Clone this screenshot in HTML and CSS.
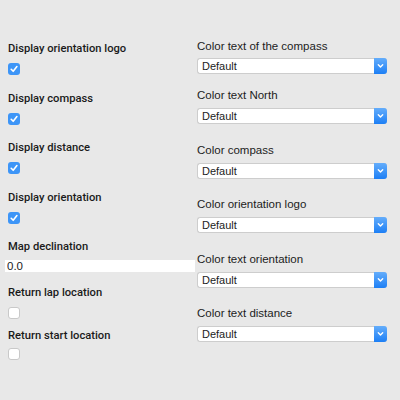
FILE: index.html
```html
<!DOCTYPE html>
<html>
<head>
<meta charset="utf-8">
<link rel="stylesheet" href="styles.css">
</head>
<body>
<div class="form">
  <div class="col col-left">
    <div class="group">
      <div class="label strong">Display orientation logo</div>
      <span class="cb on"><svg viewBox="0 0 12 12" width="12" height="12"><path d="M3.2 6.3 L5.2 8.3 L8.9 3.6" fill="none" stroke="#fff" stroke-width="1.6" stroke-linecap="round" stroke-linejoin="round"/></svg></span>
    </div>
    <div class="group">
      <div class="label strong">Display compass</div>
      <span class="cb on"><svg viewBox="0 0 12 12" width="12" height="12"><path d="M3.2 6.3 L5.2 8.3 L8.9 3.6" fill="none" stroke="#fff" stroke-width="1.6" stroke-linecap="round" stroke-linejoin="round"/></svg></span>
    </div>
    <div class="group">
      <div class="label strong">Display distance</div>
      <span class="cb on"><svg viewBox="0 0 12 12" width="12" height="12"><path d="M3.2 6.3 L5.2 8.3 L8.9 3.6" fill="none" stroke="#fff" stroke-width="1.6" stroke-linecap="round" stroke-linejoin="round"/></svg></span>
    </div>
    <div class="group">
      <div class="label strong">Display orientation</div>
      <span class="cb on"><svg viewBox="0 0 12 12" width="12" height="12"><path d="M3.2 6.3 L5.2 8.3 L8.9 3.6" fill="none" stroke="#fff" stroke-width="1.6" stroke-linecap="round" stroke-linejoin="round"/></svg></span>
    </div>
    <div class="group group-input">
      <div class="label strong">Map declination</div>
      <input class="text-input" type="text" value="0.0">
    </div>
    <div class="group group-tight">
      <div class="label strong">Return lap location</div>
      <span class="cb"></span>
    </div>
    <div class="group group-last">
      <div class="label strong">Return start location</div>
      <span class="cb"></span>
    </div>
  </div>
  <div class="col col-right">
    <div class="rgroup rgroup-first">
      <div class="label">Color text of the compass</div>
      <div class="select"><span class="sel-text">Default</span><span class="sel-btn"><svg viewBox="0 0 13 16" width="13" height="16"><path d="M4.3 6.8 L6.5 9 L8.7 6.8" fill="none" stroke="#fff" stroke-width="1.4" stroke-linecap="round" stroke-linejoin="round"/></svg></span></div>
    </div>
    <div class="rgroup">
      <div class="label">Color text North</div>
      <div class="select"><span class="sel-text">Default</span><span class="sel-btn"><svg viewBox="0 0 13 16" width="13" height="16"><path d="M4.3 6.8 L6.5 9 L8.7 6.8" fill="none" stroke="#fff" stroke-width="1.4" stroke-linecap="round" stroke-linejoin="round"/></svg></span></div>
    </div>
    <div class="rgroup">
      <div class="label">Color compass</div>
      <div class="select"><span class="sel-text">Default</span><span class="sel-btn"><svg viewBox="0 0 13 16" width="13" height="16"><path d="M4.3 6.8 L6.5 9 L8.7 6.8" fill="none" stroke="#fff" stroke-width="1.4" stroke-linecap="round" stroke-linejoin="round"/></svg></span></div>
    </div>
    <div class="rgroup">
      <div class="label">Color orientation logo</div>
      <div class="select"><span class="sel-text">Default</span><span class="sel-btn"><svg viewBox="0 0 13 16" width="13" height="16"><path d="M4.3 6.8 L6.5 9 L8.7 6.8" fill="none" stroke="#fff" stroke-width="1.4" stroke-linecap="round" stroke-linejoin="round"/></svg></span></div>
    </div>
    <div class="rgroup">
      <div class="label">Color text orientation</div>
      <div class="select"><span class="sel-text">Default</span><span class="sel-btn"><svg viewBox="0 0 13 16" width="13" height="16"><path d="M4.3 6.8 L6.5 9 L8.7 6.8" fill="none" stroke="#fff" stroke-width="1.4" stroke-linecap="round" stroke-linejoin="round"/></svg></span></div>
    </div>
    <div class="rgroup">
      <div class="label">Color text distance</div>
      <div class="select"><span class="sel-text">Default</span><span class="sel-btn"><svg viewBox="0 0 13 16" width="13" height="16"><path d="M4.3 6.8 L6.5 9 L8.7 6.8" fill="none" stroke="#fff" stroke-width="1.4" stroke-linecap="round" stroke-linejoin="round"/></svg></span></div>
    </div>
  </div>
</div>
</body>
</html>
```
FILE: styles.css
```css
html, body {
  margin: 0;
  padding: 0;
  background: #e8e8e8;
}
body {
  width: 400px;
  height: 400px;
  overflow: hidden;
  font-family: "Liberation Sans", Arial, sans-serif;
  font-size: 11px;
  color: #1c1c1c;
}
.form {
  display: flex;
  align-items: flex-start;
}
.col {
  display: flex;
  flex-direction: column;
  align-items: flex-start;
}
.col-left {
  width: 189px;
  padding: 42px 0 0 8px;
}
.col-right {
  width: 192px;
  padding: 39px 0 0 0;
}
.label {
  line-height: 14px;
  height: 14px;
  font-size: 11.5px;
  white-space: nowrap;
}
.strong {
  font-family: Roboto, "Liberation Sans", Arial, sans-serif;
  font-weight: 500;
  font-size: 11.2px;
  color: #1a1a1a;
}
.group {
  display: flex;
  flex-direction: column;
  align-items: flex-start;
  gap: 7px;
  margin-bottom: 16.5px;
}
.group-input {
  gap: 6px;
  margin-bottom: 14px;
}
.group-tight {
  margin-bottom: 10px;
}
.group-last {
  gap: 5px;
}
.cb {
  display: block;
  width: 12px;
  height: 12px;
  box-sizing: border-box;
  border-radius: 3px;
  background: #fff;
  border: 1px solid #c9c9c9;
}
.cb.on {
  background: #3d95f7;
  border: none;
}
.cb svg {
  display: block;
}
.text-input {
  display: block;
  margin: 0 0 0 -3px;
  width: 190px;
  height: 12px;
  box-sizing: border-box;
  border: none;
  padding: 0 2px;
  background: #fff;
  font-family: "Liberation Sans", Arial, sans-serif;
  font-size: 11.5px;
  line-height: 12px;
  color: #1c1c1c;
  outline: none;
}
.rgroup {
  display: flex;
  flex-direction: column;
  align-items: flex-start;
  gap: 6px;
  margin-bottom: 18.5px;
}
.rgroup-first {
  gap: 5px;
  margin-bottom: 14px;
}
.select {
  display: flex;
  align-items: stretch;
  width: 190px;
  height: 16px;
  box-sizing: border-box;
  background: #fff;
  border: 1px solid #cdcdcd;
  border-right: none;
  border-radius: 3px;
}
.sel-text {
  flex: 1;
  padding-left: 4px;
  line-height: 15px;
  font-size: 11px;
}
.sel-btn {
  width: 13px;
  margin: -1px 0 -1px 0;
  border-radius: 0 3px 3px 0;
  background: linear-gradient(#64adfb, #1d7ff5);
  display: flex;
  align-items: center;
  justify-content: center;
}
.sel-btn svg {
  display: block;
}
```
